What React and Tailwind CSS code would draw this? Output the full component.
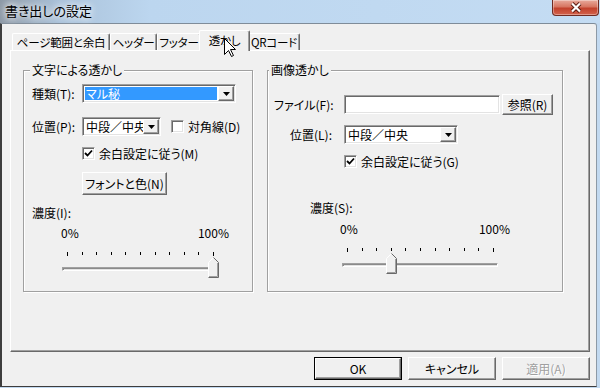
import React from "react";

// --- styles Windows classiques ---
const raised =
  "bg-[#f0f0f0] border border-t-white border-l-white border-r-[#696969] border-b-[#696969] shadow-[inset_-1px_-1px_0_#a0a0a0]";
const sunken =
  "bg-white border border-t-[#a0a0a0] border-l-[#a0a0a0] border-r-white border-b-white shadow-[inset_1px_1px_0_#696969,inset_-1px_-1px_0_#e3e3e3]";

function DropArrow() {
  return (
    <div className={`${raised} w-[16px] h-full flex items-center justify-center`}>
      <svg width="7" height="4" viewBox="0 0 7 4">
        <path d="M0 0 H7 L3.5 4 Z" fill="#000" />
      </svg>
    </div>
  );
}

function ComboBox({ className, text, selected }) {
  return (
    <div className={`${sunken} ${className} h-[19px] p-[1px] flex`}>
      <div className="flex-1 overflow-hidden whitespace-nowrap flex items-center">
        <span
          className={
            selected
              ? "m-[1px] pl-[1px] flex-1 h-[13px] leading-[13px] bg-[#3399ff] text-white"
              : "pl-[2px] leading-[15px]"
          }
        >
          {text}
        </span>
      </div>
      <DropArrow />
    </div>
  );
}

function CheckBox({ checked }) {
  return (
    <div className={`${sunken} w-[13px] h-[13px] shrink-0 flex items-center justify-center`}>
      {checked && (
        <svg width="9" height="9" viewBox="0 0 9 9">
          <path d="M1 4 L3.5 6.5 L8 1.5" fill="none" stroke="#000" strokeWidth="1.8" />
        </svg>
      )}
    </div>
  );
}

function Bouton({ className, children, disabled }) {
  return (
    <button
      className={`${raised} ${className} flex items-center justify-center ${
        disabled ? "text-[#a0a0a0] [text-shadow:1px_1px_0_#fff]" : "text-black"
      }`}
    >
      {children}
    </button>
  );
}

// --- curseur du trackbar ---
function Slider({ value, className }) {
  const step = 14.6;
  const ticks = Array.from({ length: 11 }, (_, i) => i);
  return (
    <div className={`relative w-[156px] h-[26px] ${className}`}>
      {ticks.map((i) => (
        <span
          key={i}
          className="absolute top-0 w-px bg-black"
          style={{ left: 5 + Math.round(i * step), height: i === 0 || i === 10 ? 4 : 3 }}
        />
      ))}
      <div className="absolute left-0 right-0 top-[15px] h-[4px] border border-t-[#a0a0a0] border-l-[#a0a0a0] border-r-white border-b-white bg-[#e3e3e3] shadow-[inset_1px_1px_0_#8a8a8a]" />
      <svg
        className="absolute top-[5px]"
        style={{ left: Math.round(value * step) }}
        width="11"
        height="21"
        viewBox="0 0 11 21"
      >
        <path d="M0.5 20.5 V5.5 L5.5 0.5 L10.5 5.5 V20.5 Z" fill="#f0f0f0" />
        <path d="M0.5 20 V5.5 L5.5 0.5" fill="none" stroke="#fff" />
        <path d="M5.5 0.5 L10.5 5.5 V20.5 H0.5" fill="none" stroke="#696969" />
        <path d="M9.5 6 V19.5 H1" fill="none" stroke="#a0a0a0" />
      </svg>
    </div>
  );
}

function Onglet({ label, className, actif }) {
  if (actif) {
    return (
      <div className="relative z-10 -mx-[2px] -mb-[1px] h-[21px] w-[51px] bg-[#f0f0f0] border border-b-0 border-t-white border-l-white border-r-[#696969] shadow-[inset_-1px_0_0_#a0a0a0] rounded-t-[2px] flex justify-center pt-[1px] whitespace-nowrap text-[11.5px] tracking-[-0.2px]">
        {label}
      </div>
    );
  }
  return (
    <div
      className={`${className} h-[17px] border border-b-0 border-t-white border-l-white border-r-[#696969] shadow-[inset_-1px_0_0_#a0a0a0] rounded-t-[2px] flex items-center justify-center whitespace-nowrap text-[11.5px] tracking-[-0.2px]`}
    >
      {label}
    </div>
  );
}

export default function App() {
  return (
    <div className="relative w-[600px] h-[388px] overflow-hidden bg-[#c2d9f0] text-black text-[12px] leading-[16px] font-['Noto_Sans_CJK_JP','Noto_Sans',sans-serif] [font-feature-settings:'palt']">
      {/* barre de titre */}
      <div className="h-[23px] flex justify-between bg-[linear-gradient(90deg,#8d99a6_0%,#aac2da_10%,#bcd6ef_25%,#c4dcf3_100%)]">
        <div className="ml-[5px] mt-[2px] text-[13px] leading-[18px] [text-shadow:0_0_6px_#fff,0_0_10px_#fff]">
          書き出しの設定
        </div>
        <div className="mr-[1px] w-[47px] h-[16px] rounded-b-[4px] border border-t-0 border-[#6f2b22] bg-[linear-gradient(180deg,#e8aa9c_0%,#d77561_45%,#c2412c_55%,#d3634d_100%)] shadow-[inset_0_0_0_1px_rgba(255,255,255,0.35)] flex items-center justify-center">
          <svg width="12" height="11" viewBox="0 0 12 11">
            <path d="M2 1.5 L10 9.5 M10 1.5 L2 9.5" stroke="#5a1a10" strokeWidth="4" />
            <path d="M2 1.5 L10 9.5 M10 1.5 L2 9.5" stroke="#fff" strokeWidth="2.2" />
          </svg>
        </div>
      </div>

      {/* zone client */}
      <div className="w-[597px] h-[364px] bg-[#f0f0f0] border-t border-r border-t-[#7f8c99] border-r-[#8c99a6] border-l-2 border-l-[#3d3d3d] border-b border-b-[#3d3d3d] rounded-tr-[3px] flex flex-col">
        {/* onglets */}
        <div className="h-[26px] pl-[10px] flex items-end">
          <Onglet label="ページ範囲と余白" className="w-[98px]" />
          <Onglet label="ヘッダー" className="w-[47px]" />
          <Onglet label="フッター" className="w-[44px]" />
          <Onglet label="透かし" actif />
          <Onglet label="QRコード" className="w-[52px]" />
        </div>

        {/* panneau */}
        <div className="ml-[8px] w-[580px] h-[302px] border border-t-white border-l-white border-r-[#696969] border-b-[#696969] shadow-[inset_-1px_-1px_0_#a0a0a0] pt-[11px] pl-[12px] flex items-start gap-[14px]">
          <fieldset className="w-[230px] h-[230px] border border-[#a0a0a0] shadow-[1px_1px_0_#fff,inset_1px_1px_0_#fff]">
            <legend className="ml-[6px] px-[2px] bg-[#f0f0f0]">文字による透かし</legend>
            <div className="pl-[8px]">
              <div className="mt-[6px] h-[19px] flex items-center">
                <span className="w-[50px]">種類(T):</span>
                <ComboBox className="w-[154px]" text="マル秘" selected />
              </div>
              <div className="mt-[14px] h-[19px] flex items-center">
                <span className="w-[50px]">位置(P):</span>
                <ComboBox className="w-[79px]" text="中段／中央" />
                <div className="ml-[10px]">
                  <CheckBox />
                </div>
                <span className="ml-[4px]">対角線(D)</span>
              </div>
              <div className="mt-[11px] h-[13px] pl-[50px] flex items-center">
                <CheckBox checked />
                <span className="ml-[4px]">余白設定に従う(M)</span>
              </div>
              <Bouton className="mt-[12px] ml-[50px] w-[85px] h-[23px]">フォントと色(N)</Bouton>
              <div className="mt-[10px]">濃度(I):</div>
              <div className="mt-[4px] w-[197px] pl-[29px] flex justify-between">
                <span>0%</span>
                <span>100%</span>
              </div>
              <Slider value={10} className="mt-[11px] ml-[30px]" />
            </div>
          </fieldset>

          <fieldset className="w-[296px] h-[230px] border border-[#a0a0a0] shadow-[1px_1px_0_#fff,inset_1px_1px_0_#fff]">
            <legend className="ml-[1px] px-[2px] bg-[#f0f0f0]">画像透かし</legend>
            <div className="pl-[6px]">
              <div className="mt-[16px] h-[21px] flex items-center">
                <span className="w-[70px]">ファイル(F):</span>
                <div className={`${sunken} w-[156px] h-[19px]`} />
                <Bouton className="ml-[2px] w-[51px] h-[21px]">参照(R)</Bouton>
              </div>
              <div className="mt-[10px] h-[19px] flex items-center">
                <span className="w-[70px] pl-[16px]">位置(L):</span>
                <ComboBox className="w-[114px]" text="中段／中央" />
              </div>
              <div className="mt-[11px] h-[13px] pl-[70px] flex items-center">
                <CheckBox checked />
                <span className="ml-[4px]">余白設定に従う(G)</span>
              </div>
              <div className="mt-[32px] ml-[36px]">濃度(S):</div>
              <div className="mt-[5px] ml-[66px] w-[170px] flex justify-between">
                <span>0%</span>
                <span>100%</span>
              </div>
              <Slider value={3} className="mt-[11px] ml-[68px]" />
            </div>
          </fieldset>
        </div>

        {/* boutons du bas */}
        <div className="mt-[5px] pr-[6px] flex justify-end gap-[6px]">
          <div className="w-[88px] h-[23px] border border-black">
            <Bouton className="w-full h-full">OK</Bouton>
          </div>
          <Bouton className="w-[88px] h-[23px]">キャンセル</Bouton>
          <Bouton className="w-[88px] h-[23px]" disabled>
            適用(A)
          </Bouton>
        </div>
      </div>

      {/* pointeur de souris */}
      <svg className="absolute z-20 left-[224px] top-[38px]" width="13" height="20" viewBox="0 0 13 20">
        <path
          d="M0.5 0.5 V16.5 L4.5 12.5 L7.5 18.5 L9.5 17.5 L6.5 11.5 H11.5 Z"
          fill="#fff"
          stroke="#000"
          strokeLinejoin="miter"
        />
      </svg>
    </div>
  );
}
